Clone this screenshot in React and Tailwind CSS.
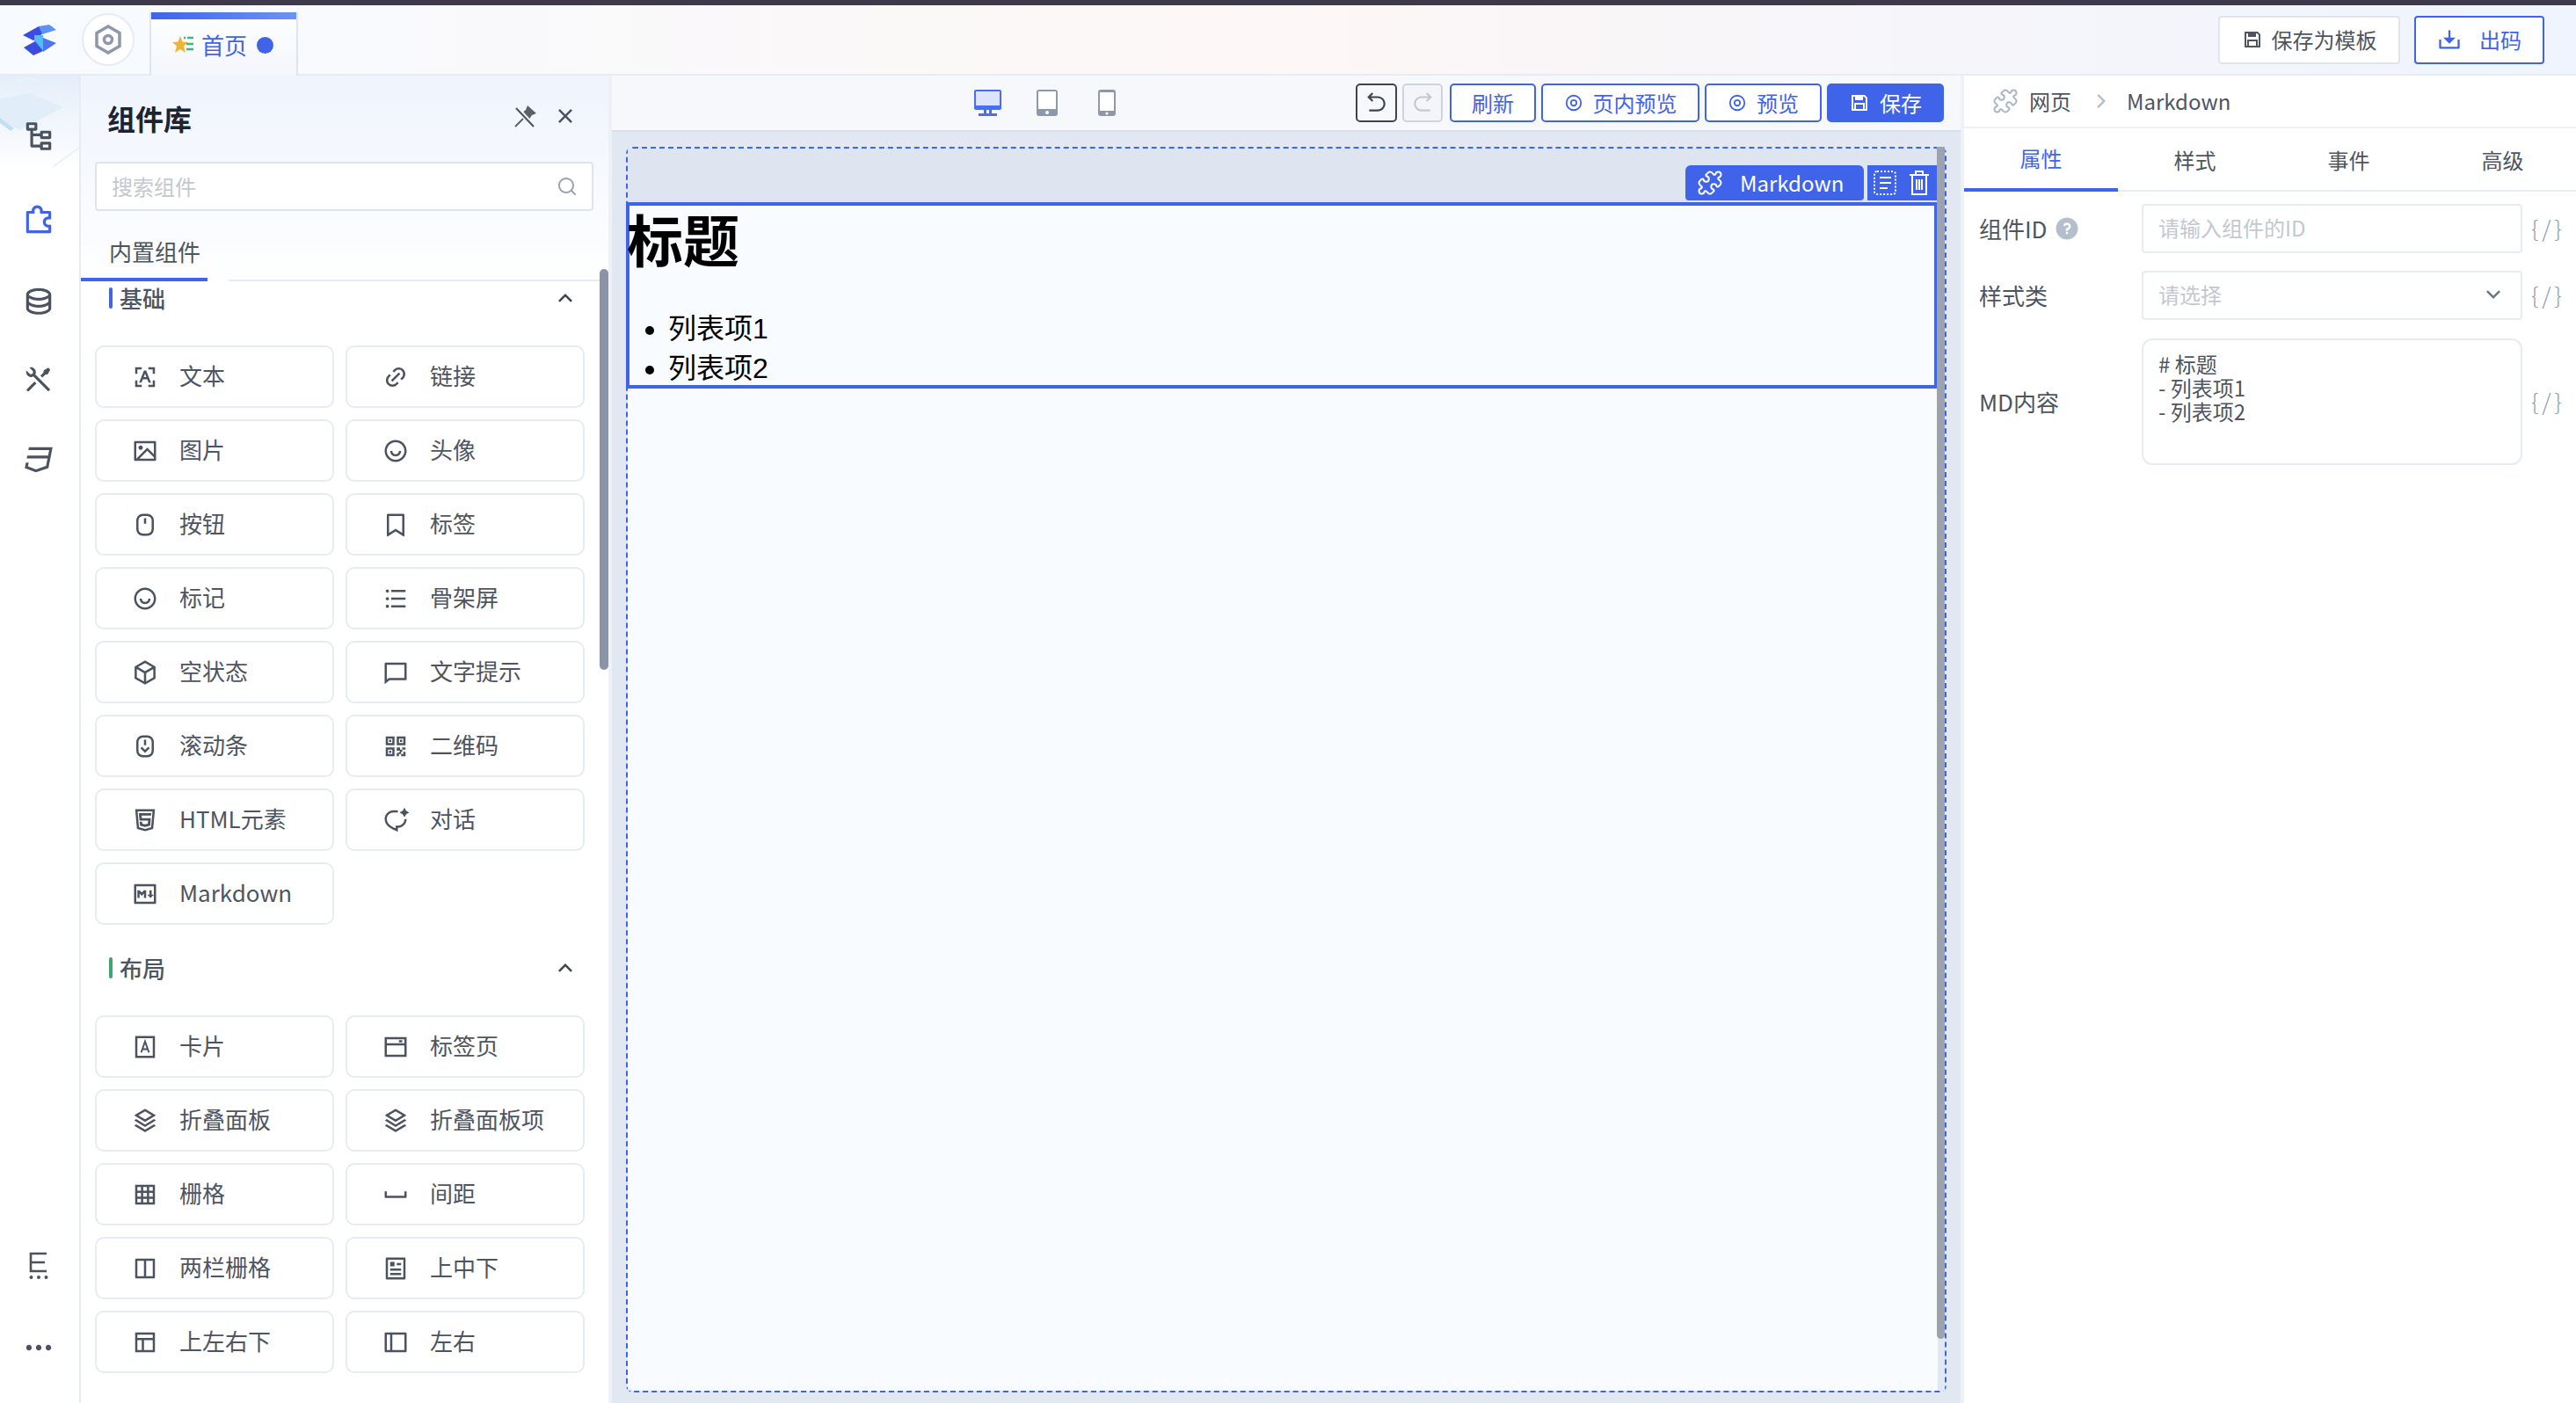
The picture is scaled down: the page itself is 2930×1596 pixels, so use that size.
import {
  RiArrowDownSLine,
  RiArrowGoBackLine,
  RiArrowGoForwardLine,
  RiArrowRightSLine,
  RiArrowUpSLine,
  RiArticleLine,
  RiBookmarkLine,
  RiBox3Line,
  RiCharacterRecognitionLine,
  RiChat4Line,
  RiChatAiLine,
  RiCloseLine,
  RiCss3Line,
  RiDatabase2Line,
  RiDownload2Line,
  RiHtml5Line,
  RiImageLine,
  RiLayoutColumnLine,
  RiLayoutLeftLine,
  RiLinkM,
  RiListUnordered,
  RiMarkdownLine,
  RiMoreFill,
  RiMouseLine,
  RiNodeTree,
  RiPuzzle2Line,
  RiQrCodeLine,
  RiQuestionFill,
  RiSave3Line,
  RiScrollToBottomLine,
  RiSearchLine,
  RiSpace,
  RiStackLine,
  RiToolsLine,
  RiUserSmileLine,
} from 'react-icons/ri';
import { Puzzle } from 'lucide-react';

const CardIcon = (props) => (
  <svg viewBox="0 0 24 24" fill="none" stroke="currentColor" strokeWidth="2" {...props}>
    <rect x="4" y="3" width="16" height="18" />
    <path d="M8.5 17 12 7l3.5 10M9.7 14h4.6" strokeWidth="1.6" />
  </svg>
);

const TabsIcon = (props) => (
  <svg viewBox="0 0 24 24" fill="none" stroke="currentColor" strokeWidth="2" {...props}>
    <rect x="3" y="4" width="18" height="16" />
    <path d="M3 9.5h18M15 6.8h3" />
  </svg>
);

const GridIcon = (props) => (
  <svg viewBox="0 0 24 24" fill="none" stroke="currentColor" strokeWidth="2" {...props}>
    <rect x="4" y="4" width="16" height="16" />
    <path d="M9.3 4v16M14.7 4v16M4 9.3h16M4 14.7h16" />
  </svg>
);

const FrameIcon = (props) => (
  <svg viewBox="0 0 24 24" fill="none" stroke="currentColor" strokeWidth="2" {...props}>
    <rect x="4" y="4" width="16" height="16" />
    <path d="M4 9h16M10 9v11" />
  </svg>
);

const RingIcon = (props) => (
  <svg viewBox="0 0 24 24" fill="none" stroke="currentColor" strokeWidth="2" {...props}>
    <circle cx="12" cy="12" r="9" />
    <circle cx="12" cy="12" r="3.5" />
  </svg>
);

const LogIcon = (props) => (
  <svg viewBox="0 0 24 32" fill="none" stroke="currentColor" strokeWidth="2.6" {...props}>
    <path d="M21 2H3v20h18M3 12h16" />
    <circle cx="3.5" cy="29" r="2" fill="currentColor" stroke="none" />
    <circle cx="12" cy="29" r="2" fill="currentColor" stroke="none" />
    <circle cx="20.5" cy="29" r="2" fill="currentColor" stroke="none" />
  </svg>
);

// 划掉的图钉
const PinOffIcon = (props) => (
  <svg viewBox="0 0 26 26" {...props}>
    <polygon points="15,1 25,10 20,12 16,18 8,10 13,6" fill="#5a616e" />
    <path d="M10 16 1 25" stroke="#5a616e" strokeWidth="2" />
    <path d="M3 3 23 25" stroke="#f2f6fd" strokeWidth="4" />
    <path d="M2 4 22 25" stroke="#4b5260" strokeWidth="2" />
  </svg>
);

const BASIC = [
  ['文本', RiCharacterRecognitionLine],
  ['链接', RiLinkM],
  ['图片', RiImageLine],
  ['头像', RiUserSmileLine],
  ['按钮', RiMouseLine],
  ['标签', RiBookmarkLine],
  ['标记', RiUserSmileLine],
  ['骨架屏', RiListUnordered],
  ['空状态', RiBox3Line],
  ['文字提示', RiChat4Line],
  ['滚动条', RiScrollToBottomLine],
  ['二维码', RiQrCodeLine],
  ['HTML元素', RiHtml5Line],
  ['对话', RiChatAiLine],
  ['Markdown', RiMarkdownLine],
];

const LAYOUT = [
  ['卡片', CardIcon],
  ['标签页', TabsIcon],
  ['折叠面板', RiStackLine],
  ['折叠面板项', RiStackLine],
  ['栅格', GridIcon],
  ['间距', RiSpace],
  ['两栏栅格', RiLayoutColumnLine],
  ['上中下', RiArticleLine],
  ['上左右下', FrameIcon],
  ['左右', RiLayoutLeftLine],
];

function Section({ title, barClass, items, className }) {
  return (
    <div className={className}>
      <div className="flex h-[24px] w-[550px] items-center pl-[16px]">
        <span className={`h-[24px] w-[4px] rounded-full ${barClass}`}></span>
        <span className="ml-[8px] text-[26px] font-medium leading-none text-[#4e5561]">{title}</span>
        <RiArrowUpSLine className="ml-auto h-[30px] w-[30px] text-[#3d4450]" />
      </div>
      <div className="mt-[42px] grid grid-cols-[272px_272px] gap-[13px]">
        {items.map(([label, Icon]) => (
          <div
            key={label}
            className="flex h-[71px] items-center gap-[24px] rounded-[10px] border-2 border-[#e6ebf4] bg-white pl-[40px]"
          >
            <Icon className="h-[30px] w-[30px] shrink-0 text-[#4b5260]" />
            <span className="pb-[4px] text-[26px] leading-none text-[#4e5561]">{label}</span>
          </div>
        ))}
      </div>
    </div>
  );
}

function Rail() {
  return (
    <div className="relative flex h-full w-[92px] shrink-0 flex-col items-center overflow-hidden border-r-2 border-[#e6ebf4] bg-white pb-[44px] pr-[3px] pt-[50px] text-[#4b5260]">
      <svg className="absolute left-0 top-0 h-[110px] w-[90px]" viewBox="0 0 90 110">
        <defs>
          <linearGradient id="railGlass" x1="0" y1="0" x2="0" y2="1">
            <stop offset="0" stopColor="#e4eef9" />
            <stop offset="1" stopColor="#ffffff" />
          </linearGradient>
        </defs>
        <rect width="90" height="110" fill="url(#railGlass)" />
        <polygon points="0,26 34,20 72,36 22,62 0,50" fill="#e1eef9" />
        <polygon points="0,48 16,60 12,63 0,54" fill="#c4dff3" />
        <path d="M18 8 34 2 90 32M60 104 90 82" stroke="#eaf1f9" strokeWidth="2" fill="none" />
      </svg>
      <RiNodeTree className="relative h-[38px] w-[38px]" />
      <RiPuzzle2Line className="relative mt-[58px] h-[38px] w-[38px] text-[#3f64ea]" />
      <RiDatabase2Line className="relative mt-[53px] h-[38px] w-[38px]" />
      <RiToolsLine className="relative mt-[52px] h-[38px] w-[38px]" />
      <RiCss3Line className="relative mt-[53px] h-[38px] w-[38px]" />
      <LogIcon className="mt-auto h-[32px] w-[24px]" />
      <RiMoreFill className="mt-[58px] h-[38px] w-[38px]" />
    </div>
  );
}

function ComponentPanel() {
  return (
    <div className="relative h-full w-[600px] shrink-0 overflow-hidden bg-gradient-to-b from-[#eff4fd] to-white to-[16%]">
      <div className="flex h-[98px] items-center pl-[30px] pr-[34px]">
        <span className="pb-[2px] text-[32px] font-semibold leading-none text-[#1d2431]">组件库</span>
        <PinOffIcon className="ml-auto mb-[6px] h-[26px] w-[26px]" />
        <RiCloseLine className="mb-[6px] ml-[17px] h-[30px] w-[30px] text-[#4b5260]" />
      </div>
      <div className="ml-[16px] flex h-[56px] w-[567px] items-center rounded-[4px] border-2 border-[#dfe4ec] bg-white pl-[17px] pr-[16px]">
        <span className="text-[24px] leading-none text-[#c3c8d0]">搜索组件</span>
        <RiSearchLine className="ml-auto h-[24px] w-[24px] text-[#9aa3b0]" />
      </div>
      <div className="flex h-[80px] items-end">
        <div className="flex h-[64px] w-[144px] items-center border-b-4 border-[#3f64ea] pl-[32px] text-[26px] leading-none text-[#4e5561]">
          <span className="whitespace-nowrap">内置组件</span>
        </div>
        <div className="ml-[24px] h-[2px] flex-1 bg-[#e8ebf0]"></div>
      </div>
      <div className="ml-[16px] pt-[7px]">
        <Section title="基础" barClass="bg-[#3f64ea]" items={BASIC} />
        <Section title="布局" barClass="bg-[#3ea56f]" items={LAYOUT} className="mt-[37px]" />
      </div>
      <div className="absolute right-0 top-[220px] h-[456px] w-[10px] rounded-full bg-[#8a94a6]"></div>
    </div>
  );
}

function ToolButton({ children, solid, className }) {
  return (
    <button
      className={`flex h-[44px] items-center justify-center gap-[11px] rounded-[5px] border-2 border-[#3f64ea] text-[24px] leading-none ${
        solid ? 'bg-[#3f64ea] text-white' : 'bg-white text-[#3f64ea]'
      } ${className}`}
    >
      {children}
    </button>
  );
}

function Toolbar() {
  return (
    <div className="flex h-[64px] shrink-0 items-center border-b-2 border-[#d9dfe8] bg-[#f7f8fc] pr-[19px]">
      <div className="ml-[412px] flex items-center">
        <svg className="h-[30px] w-[31px]" viewBox="0 0 31 30">
          <rect width="31" height="23" rx="2" fill="#4a6ef0" />
          <rect x="2" y="2" width="27" height="16" fill="#dbe3fd" />
          <path d="M11 23h3v4h-3zM17 23h3v4h-3zM5 27h21v3H5z" fill="#4a6ef0" />
        </svg>
        <svg className="ml-[40px] h-[30px] w-[24px]" viewBox="0 0 24 30">
          <rect width="24" height="30" rx="3" fill="#8e98aa" />
          <rect x="2" y="2" width="20" height="20" fill="#ffffff" />
          <circle cx="12" cy="26" r="2" fill="#ffffff" />
        </svg>
        <svg className="ml-[46px] h-[30px] w-[20px]" viewBox="0 0 20 30">
          <rect width="20" height="30" rx="3" fill="#8e98aa" />
          <rect x="2" y="3" width="16" height="21" fill="#ffffff" />
          <circle cx="10" cy="27" r="1.5" fill="#ffffff" />
        </svg>
      </div>
      <div className="ml-auto flex items-center gap-[6px]">
        <button className="flex h-[44px] w-[47px] items-center justify-center rounded-[5px] border-2 border-[#3d4450] bg-[#f7f8fc]">
          <RiArrowGoBackLine className="h-[26px] w-[26px] text-[#3d4450]" />
        </button>
        <button className="flex h-[44px] w-[46px] items-center justify-center rounded-[5px] border-2 border-[#cdd4df] bg-[#f4f5f8]">
          <RiArrowGoForwardLine className="h-[26px] w-[26px] text-[#c3c8d0]" />
        </button>
        <ToolButton className="ml-[2px] w-[98px]">刷新</ToolButton>
        <ToolButton className="w-[180px]">
          <RingIcon className="h-[22px] w-[22px]" />
          页内预览
        </ToolButton>
        <ToolButton className="w-[133px]">
          <RingIcon className="h-[22px] w-[22px]" />
          预览
        </ToolButton>
        <ToolButton solid className="w-[133px]">
          <RiSave3Line className="h-[24px] w-[24px]" />
          保存
        </ToolButton>
      </div>
    </div>
  );
}

function Canvas() {
  return (
    <div className="flex min-h-0 flex-1 flex-col bg-[#e2e8f1] pb-[12px] pl-[16px] pr-[16px] pt-[17px]">
      <div className="relative flex flex-1 flex-col rounded-[8px] border-2 border-dashed border-[#3f64ea]">
        <div className="flex h-[61px] shrink-0 items-end justify-end bg-[#dfe5f0] pb-[2px] pr-[8px]">
          <div className="flex h-[40px] w-[203px] items-center rounded-t-[6px] rounded-b-[4px] bg-[#3f64ea] pl-[13px] text-white">
            <Puzzle className="h-[30px] w-[30px]" strokeWidth={1.6} />
            <span className="ml-[19px] text-[24px] leading-none">Markdown</span>
          </div>
          <div className="ml-[4px] flex h-[40px] w-[80px] items-center gap-[13px] bg-[#3f64ea] pl-[6px] text-white">
            <svg className="h-[30px] w-[28px]" viewBox="0 0 28 30" fill="none" stroke="currentColor" strokeWidth="2">
              <rect x="2" y="2" width="24" height="26" rx="3" strokeDasharray="2 2" />
              <path d="M8 9h13M8 15h13M8 21h9" />
            </svg>
            <svg className="h-[30px] w-[24px]" viewBox="0 0 24 30" fill="none" stroke="currentColor" strokeWidth="2">
              <path d="M1 6h22M8 6V2h8v4M4 6v22h16V6M9 11v12M12 11v12M15 11v12" />
            </svg>
          </div>
        </div>
        <div className="flex flex-1 flex-col bg-[#e2e8f1] pr-[8px]">
          <div className="-ml-[2px] h-[212px] border-4 border-[#3f64ea] bg-[#f8fbff] font-['Liberation_Sans','Noto_Sans_CJK_SC',sans-serif] text-black">
            <h1 className="-ml-[3px] text-[64px] font-bold leading-[84px]">标题</h1>
            <ul className="mt-[34px] list-disc pl-[44px] text-[32px] leading-[45px]">
              <li>列表项1</li>
              <li>列表项2</li>
            </ul>
          </div>
          <div className="flex-1 rounded-bl-[8px] bg-[#f8fbff]"></div>
        </div>
        <div className="absolute -top-[2px] right-0 h-[1356px] w-[9px] rounded-b-[6px] bg-[#9ca3ad]"></div>
      </div>
    </div>
  );
}

function Braces() {
  return (
    <span className="ml-[10px] whitespace-nowrap pb-[2px] text-[26px] font-light leading-none tracking-[4px] text-[#8c9bb0]">
      {'{/}'}
    </span>
  );
}

function FormRow({ label, children, extra, className }) {
  return (
    <div className={`flex items-center ${className}`}>
      <div className="flex w-[185px] items-center gap-[7px] text-[26px] leading-none text-[#4e5561]">
        <span>{label}</span>
        {extra}
      </div>
      {children}
      <Braces />
    </div>
  );
}

function PropsPanel() {
  return (
    <div className="flex h-full w-[696px] shrink-0 flex-col overflow-hidden bg-white">
      <div className="flex h-[60px] shrink-0 items-center border-b-2 border-[#eef1f6] pl-[32px]">
        <Puzzle className="h-[30px] w-[30px] text-[#aeb6c2]" strokeWidth={1.6} />
        <span className="ml-[12px] text-[24px] leading-none text-[#4e5561]">网页</span>
        <RiArrowRightSLine className="ml-[19px] h-[30px] w-[30px] text-[#b9c0cb]" />
        <span className="ml-[14px] text-[24px] leading-none text-[#4e5561]">Markdown</span>
      </div>
      <div className="flex h-[72px] shrink-0 border-b-2 border-[#e8ecf3]">
        {['属性', '样式', '事件', '高级'].map((tab, i) => (
          <div
            key={tab}
            className={`flex h-[72px] w-[175px] shrink-0 items-center justify-center text-[24px] leading-none ${
              i === 0 ? 'border-b-4 border-[#3f64ea] text-[#3f64ea]' : 'text-[#4e5561]'
            }`}
          >
            {tab}
          </div>
        ))}
      </div>
      <div className="pl-[17px] pt-[14px]">
        <FormRow
          label="组件ID"
          extra={<RiQuestionFill className="h-[30px] w-[30px] text-[#b5bfcc]" />}
        >
          <div className="flex h-[56px] w-[433px] items-center rounded-[4px] border-2 border-[#e6ebf4] pb-[2px] pl-[17px] text-[24px] leading-none text-[#c3c8d0]">
            请输入组件的ID
          </div>
        </FormRow>
        <FormRow label="样式类" className="mt-[20px]">
          <div className="flex h-[56px] w-[433px] items-center rounded-[4px] border-2 border-[#e6ebf4] pb-[2px] pl-[17px] pr-[16px] text-[24px] leading-none text-[#c3c8d0]">
            请选择
            <RiArrowDownSLine className="ml-auto h-[30px] w-[30px] text-[#6b7482]" />
          </div>
        </FormRow>
        <FormRow label="MD内容" className="mt-[21px]">
          <div className="h-[144px] w-[433px] rounded-[12px] border-2 border-[#e6ebf4] pl-[17px] pt-[13px] text-[24px] leading-[27px] text-[#4e5561]">
            <div># 标题</div>
            <div>- 列表项1</div>
            <div>- 列表项2</div>
          </div>
        </FormRow>
      </div>
    </div>
  );
}

export default function App() {
  return (
    <div className="flex h-[1596px] w-[2930px] flex-col overflow-hidden bg-white font-['Noto_Sans_CJK_SC',sans-serif]">
      <div className="h-[6px] shrink-0 bg-[#3e3a4c]"></div>
      <header className="flex h-[80px] shrink-0 items-center border-b-2 border-[#e6ebf4] bg-gradient-to-r from-[#f7fbff] via-[#fdf7f6] to-[#eff4fe] pr-[36px]">
        <svg className="ml-[26px] h-[35px] w-[38px]" viewBox="0 0 38 35">
          <polygon points="0,12 18,2 34,2 20,12 12,18" fill="#3c4be0" />
          <polygon points="18,2 30,0 38,6 22,11" fill="#5f92f5" />
          <polygon points="13,12 23,12 23,30 13,24" fill="#55b8f7" />
          <polygon points="23,15 38,21 23,31" fill="#4f74ee" />
          <polygon points="1,26 14,19 23,30 12,35" fill="#3c4be0" />
        </svg>
        <div className="ml-[29px] flex h-[60px] w-[60px] items-center justify-center rounded-full border-2 border-[#e6ebf4] bg-white">
          <svg className="h-[34px] w-[30px]" viewBox="0 0 30 34" fill="none" stroke="#8e98aa" strokeWidth="3.5">
            <polygon points="15,2 28,9.5 28,24.5 15,32 2,24.5 2,9.5" />
            <circle cx="15" cy="17" r="4.5" />
          </svg>
        </div>
        <div className="-mb-[2px] ml-[17px] flex h-[72px] w-[169px] flex-col self-end border-x-2 border-[#dfe5ee] bg-gradient-to-b from-white to-[#f3f6fd]">
          <div className="h-[8px] bg-gradient-to-r from-[#3f64ea] to-[#6d93f5]"></div>
          <div className="flex flex-1 items-center pb-[6px] pl-[24px]">
            <svg className="h-[20px] w-[24px]" viewBox="0 0 24 20">
              <polygon points="9,0 11.5,6.5 18,7 13,11.5 15,19 9,15 3,19 5,11.5 0,7 6.5,6.5" fill="#efb53a" />
              <path d="M13 2h2M17 2h7M16 9h8M16 15h8" stroke="#3fb87f" strokeWidth="2.4" />
            </svg>
            <span className="ml-[9px] text-[26px] leading-none text-[#3f64ea]">首页</span>
            <span className="ml-[11px] h-[19px] w-[19px] rounded-full bg-[#3f64ea]"></span>
          </div>
        </div>
        <button className="ml-auto flex h-[55px] w-[207px] items-center justify-center gap-[10px] rounded-[4px] border-2 border-[#e0e4ec] bg-white text-[24px] leading-none text-[#4e5561]">
          <RiSave3Line className="h-[24px] w-[24px]" />
          保存为模板
        </button>
        <button className="ml-[16px] flex h-[55px] w-[148px] items-center justify-center gap-[20px] rounded-[4px] border-2 border-[#3f64ea] bg-white text-[24px] leading-none text-[#3f64ea]">
          <RiDownload2Line className="h-[28px] w-[28px]" />
          出码
        </button>
      </header>
      <div className="flex min-h-0 flex-1">
        <Rail />
        <ComponentPanel />
        <div className="w-[4px] shrink-0 bg-[#eef1f6]"></div>
        <main className="flex h-full w-[1534px] shrink-0 flex-col">
          <Toolbar />
          <Canvas />
        </main>
        <div className="w-[4px] shrink-0 bg-[#eef1f6]"></div>
        <PropsPanel />
      </div>
    </div>
  );
}
